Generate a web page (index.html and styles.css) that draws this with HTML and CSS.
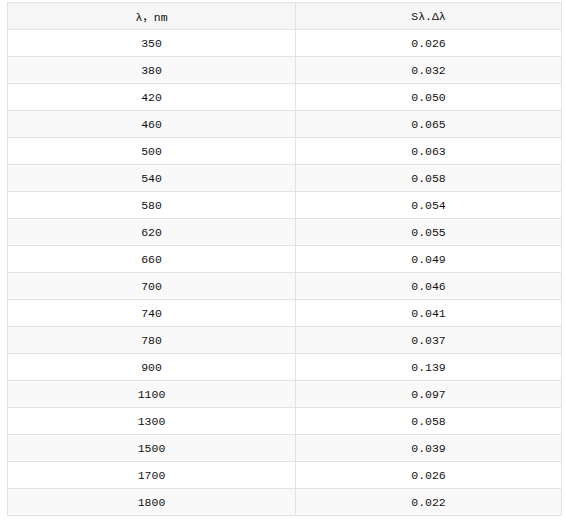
FILE: index.html
```html
<!DOCTYPE html>
<html>
<head>
<meta charset="utf-8">
<link rel="stylesheet" href="styles.css">
</head>
<body>
<table class="data">
<thead>
<tr><th class="c1">λ，nm</th><th class="c2">Sλ.Δλ</th></tr>
</thead>
<tbody>
<tr><td>350</td><td>0.026</td></tr>
<tr><td>380</td><td>0.032</td></tr>
<tr><td>420</td><td>0.050</td></tr>
<tr><td>460</td><td>0.065</td></tr>
<tr><td>500</td><td>0.063</td></tr>
<tr><td>540</td><td>0.058</td></tr>
<tr><td>580</td><td>0.054</td></tr>
<tr><td>620</td><td>0.055</td></tr>
<tr><td>660</td><td>0.049</td></tr>
<tr><td>700</td><td>0.046</td></tr>
<tr><td>740</td><td>0.041</td></tr>
<tr><td>780</td><td>0.037</td></tr>
<tr><td>900</td><td>0.139</td></tr>
<tr><td>1100</td><td>0.097</td></tr>
<tr><td>1300</td><td>0.058</td></tr>
<tr><td>1500</td><td>0.039</td></tr>
<tr><td>1700</td><td>0.026</td></tr>
<tr><td>1800</td><td>0.022</td></tr>
</tbody>
</table>
</body>
</html>
```
FILE: styles.css
```css
html, body {
  margin: 0;
  padding: 0;
  background: #fff;
}
body {
  padding: 2px 0 0 7px;
}
.data {
  border-collapse: collapse;
  width: 555px;
  table-layout: fixed;
  font-family: "Liberation Mono", "Noto Sans CJK SC", monospace;
  font-size: 11.5px;
  color: #111;
}
.data th, .data td {
  border: 1px solid #e2e2e2;
  height: 27px;
  padding: 0;
  text-align: center;
  vertical-align: middle;
  font-weight: normal;
  box-sizing: border-box;
}
.data .c1 { width: 288px; }
.data thead th { background: #f6f6f6; }
.data tbody tr:nth-child(even) td { background: #f9f9f9; }
```
